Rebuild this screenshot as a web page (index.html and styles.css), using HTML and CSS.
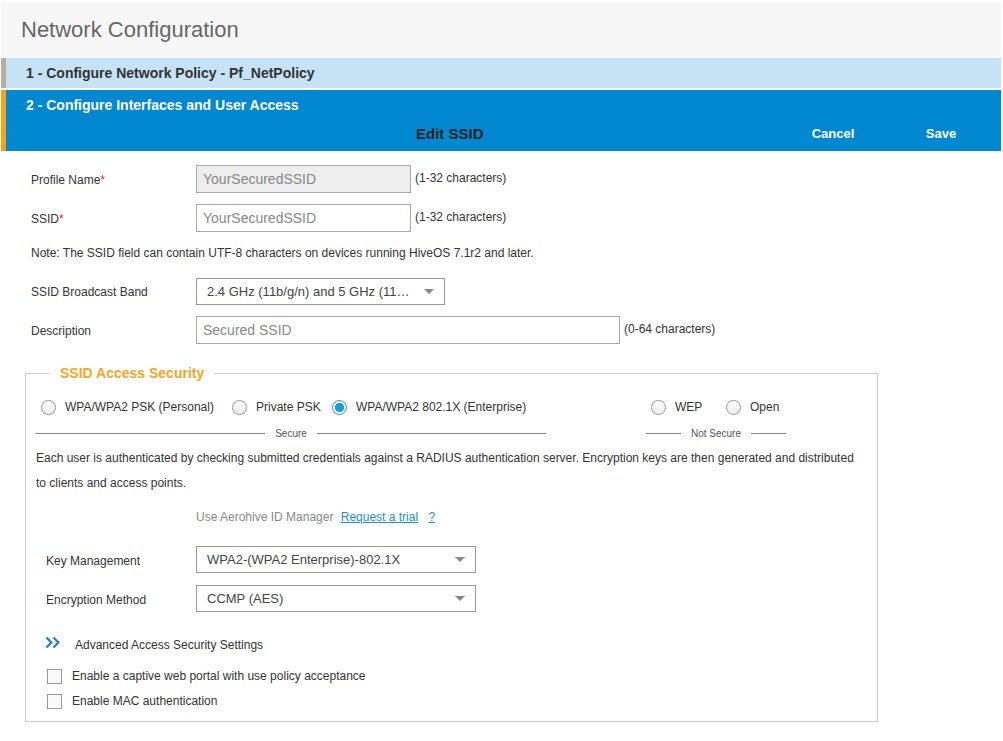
FILE: index.html
```html
<!DOCTYPE html>
<html>
<head>
<meta charset="utf-8">
<link rel="stylesheet" href="styles.css">
</head>
<body>
<div class="page">
  <header class="page-head">
    <h1 class="page-title">Network Configuration</h1>
  </header>
  <div class="step step-done">1 - Configure Network Policy - Pf_NetPolicy</div>
  <div class="step step-active">
    <div class="step-title">2 - Configure Interfaces and User Access</div>
    <div class="subbar">
      <div class="sub-title">Edit SSID</div>
      <button class="bar-btn">Cancel</button>
      <button class="bar-btn">Save</button>
    </div>
  </div>

  <form class="form">
    <div class="row">
      <label class="lbl">Profile Name<span class="req">*</span></label>
      <div class="input input-disabled">YourSecuredSSID</div>
      <span class="hint">(1-32 characters)</span>
    </div>
    <div class="row">
      <label class="lbl">SSID<span class="req">*</span></label>
      <div class="input">YourSecuredSSID</div>
      <span class="hint">(1-32 characters)</span>
    </div>
    <p class="note">Note: The SSID field can contain UTF-8 characters on devices running HiveOS 7.1r2 and later.</p>
    <div class="row">
      <label class="lbl">SSID Broadcast Band</label>
      <div class="select select-band"><span class="sel-text">2.4 GHz (11b/g/n) and 5 GHz (11…</span><span class="caret"></span></div>
    </div>
    <div class="row">
      <label class="lbl">Description</label>
      <div class="input input-wide">Secured SSID</div>
      <span class="hint">(0-64 characters)</span>
    </div>

    <fieldset class="security">
      <legend class="legend">SSID Access Security</legend>
      <div class="groups">
        <div class="group group-secure">
          <div class="radios">
            <span class="radio-item w1"><span class="radio"></span>WPA/WPA2 PSK (Personal)</span>
            <span class="radio-item w2"><span class="radio"></span>Private PSK</span>
            <span class="radio-item"><span class="radio radio-on"></span>WPA/WPA2 802.1X (Enterprise)</span>
          </div>
          <div class="divider"><span>Secure</span></div>
        </div>
        <div class="group group-open">
          <div class="radios">
            <span class="radio-item w3"><span class="radio"></span>WEP</span>
            <span class="radio-item"><span class="radio"></span>Open</span>
          </div>
          <div class="divider"><span>Not Secure</span></div>
        </div>
      </div>
      <p class="desc">Each user is authenticated by checking submitted credentials against a RADIUS authentication server. Encryption keys are then generated and distributed to clients and access points.</p>
      <div class="idm">Use Aerohive ID Manager <a class="link" href="#">Request a trial</a> <a class="link q" href="#">?</a></div>
      <div class="row row-inner row-key">
        <label class="lbl lbl-inner">Key Management</label>
        <div class="select select-sec"><span class="sel-text">WPA2-(WPA2 Enterprise)-802.1X</span><span class="caret"></span></div>
      </div>
      <div class="row row-inner">
        <label class="lbl lbl-inner">Encryption Method</label>
        <div class="select select-sec"><span class="sel-text">CCMP (AES)</span><span class="caret"></span></div>
      </div>
      <div class="advanced">
        <svg class="chev" width="15" height="13" viewBox="0 0 15 13"><polyline points="1.5,1.5 6.3,6.5 1.5,11.5" fill="none" stroke="#1a7fc4" stroke-width="2.1"/><polyline points="8.5,1.5 13.3,6.5 8.5,11.5" fill="none" stroke="#1a7fc4" stroke-width="2.1"/></svg>
        <span class="adv-text">Advanced Access Security Settings</span>
      </div>
      <div class="check-row"><span class="check"></span>Enable a captive web portal with use policy acceptance</div>
      <div class="check-row"><span class="check"></span>Enable MAC authentication</div>
    </fieldset>
  </form>
</div>
</body>
</html>
```
FILE: styles.css
```css
* { box-sizing: border-box; }
html, body { margin: 0; padding: 0; background: #fff; }
body {
  font-family: "Liberation Sans", Arial, sans-serif;
  color: #333;
  font-size: 12px;
}
.page { padding: 2px 2px 0 1px; }

.page-head {
  background: #f7f7f7;
  height: 56px;
  display: flex;
  align-items: center;
  padding-left: 20px;
}
.page-title {
  margin: 0;
  font-weight: normal;
  font-size: 22px;
  color: #666;
}

.step {
  font-weight: bold;
  font-size: 14px;
}
.step-done {
  background: #c6e3f5;
  border-left: 5px solid #b3b1a3;
  height: 30px;
  line-height: 30px;
  padding-left: 20px;
  color: #333;
  margin-bottom: 2px;
}
.step-active {
  background: #0288d1;
  border-left: 5px solid #f7a11a;
  height: 61px;
  color: #fff;
}
.step-title {
  padding-left: 20px;
  height: 30px;
  line-height: 30px;
}
.subbar {
  display: flex;
  align-items: center;
  height: 27px;
}
.sub-title {
  flex: 1;
  color: #222;
  font-size: 15px;
  padding-left: 410px;
}
.bar-btn {
  background: none;
  border: 0;
  color: #fff;
  font: bold 13px "Liberation Sans", Arial, sans-serif;
  width: 108px;
  padding: 0;
  text-align: center;
}
.bar-btn:last-child { margin-right: 6px; }

.form { padding: 14px 0 0 30px; }
.row {
  display: flex;
  align-items: center;
  min-height: 28px;
  margin-bottom: 11px;
}
.lbl { width: 165px; flex: none; padding-top: 2px; }
.req { color: #d9232e; }
.input {
  width: 215px;
  height: 28px;
  border: 1px solid #aaa;
  padding-left: 6px;
  display: flex;
  align-items: center;
  font-size: 14px;
  color: #888;
}
.input-disabled { background: #eee; }
.input-wide { width: 424px; }
.hint { margin-left: 4px; margin-top: -3px; }
.note { margin: 0 0 14px; line-height: 20px; }

.select {
  height: 27px;
  border: 1px solid #999;
  display: flex;
  align-items: center;
  padding: 0 10px;
  font-size: 13px;
  color: #444;
}
.select-band { width: 249px; }
.select-sec { width: 280px; }
.sel-text { flex: 1; white-space: nowrap; overflow: hidden; }
.caret {
  width: 0; height: 0;
  border-left: 5px solid transparent;
  border-right: 5px solid transparent;
  border-top: 5px solid #888;
  margin-left: 8px;
}

.security {
  margin: 19px 0 0 -6px;
  width: 853px;
  border: 1px solid #ccc;
  padding: 0 0 10px 10px;
}
.legend {
  margin-left: 13px;
  padding: 0 11px;
  font-size: 14px;
  font-weight: bold;
  color: #f5a623;
  line-height: 20px;
}
.groups {
  display: flex;
  gap: 100px;
  margin-top: 14px;
}
.group-secure { width: 510px; }
.group-open { width: 140px; }
.radios {
  display: flex;
  align-items: center;
  height: 20px;
  padding-left: 5px;
  white-space: nowrap;
}
.radio-item { display: flex; align-items: center; }
.w1 { width: 191px; }
.w2 { width: 100px; }
.w3 { width: 75px; }
.radio {
  width: 15px; height: 15px;
  border: 1px solid #999;
  border-radius: 50%;
  background: linear-gradient(#fff, #ececec);
  margin-right: 9px;
  flex: none;
}
.radio-on {
  border: 1.5px solid #1a9ad9;
  background: radial-gradient(circle, #1a9ad9 0 4.3px, #fff 4.8px);
}
.divider {
  display: flex;
  align-items: center;
  margin-top: 10px;
  height: 12px;
  font-size: 10px;
  color: #555;
}
.divider::before, .divider::after {
  content: "";
  flex: 1;
  border-top: 1px solid #888;
}
.divider span { padding: 0 10px; }
.desc {
  margin: 7px 0 0;
  line-height: 25px;
  width: 830px;
}
.idm {
  margin: 11px 0 0 160px;
  line-height: 20px;
  color: #888;
}
.link { color: #1a8fd6; margin-left: 4px; }
.q { margin-left: 7px; }
.row-inner { margin-bottom: 11px; }
.row-key { margin-top: 18px; }
.lbl-inner { width: 160px; padding-left: 10px; padding-top: 3px; }
.advanced {
  display: flex;
  align-items: center;
  height: 20px;
  margin: 21px 0 0 9px;
}
.chev { margin-right: 15px; margin-top: -2px; flex: none; }
.adv-text { padding-top: 3px; }
.check-row {
  display: flex;
  align-items: center;
  height: 20px;
  margin: 13px 0 0 11px;
}
.check-row + .check-row { margin-top: 5px; }
.check {
  width: 15px; height: 15px;
  border: 1px solid #999;
  background: #fafafa;
  margin-right: 10px;
}
```
